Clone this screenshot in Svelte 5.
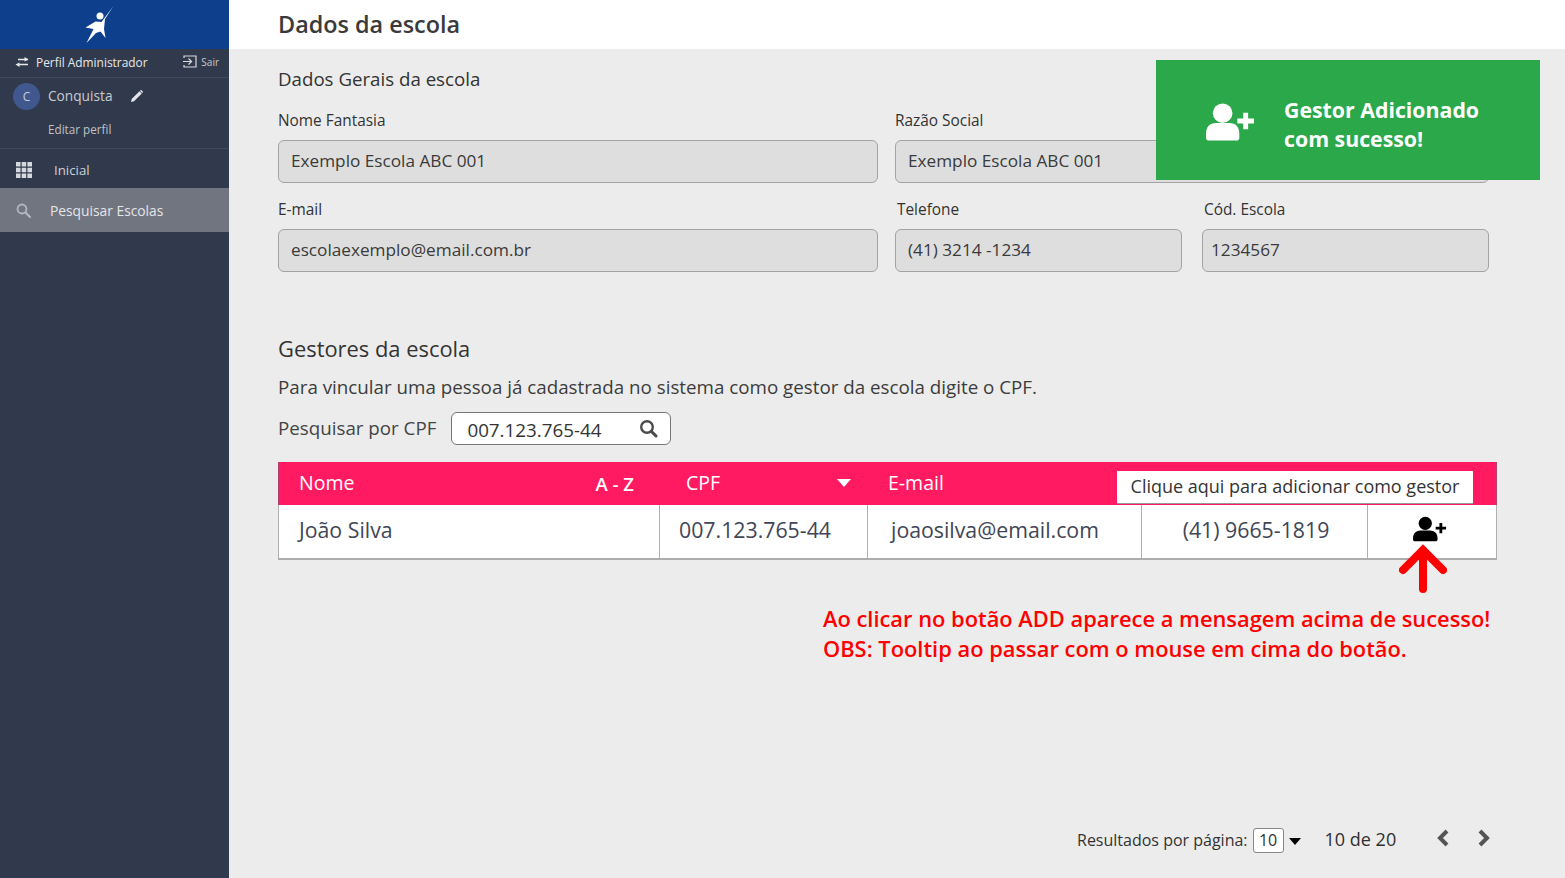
<script lang="ts">
	const navItems = [
		{ label: 'Inicial', icon: 'grid', active: false },
		{ label: 'Pesquisar Escolas', icon: 'search', active: true }
	];
</script>

<div class="page">
	<aside class="sidebar">
		<div class="brand">
			<svg width="34" height="40" viewBox="0 0 34 40">
				<circle cx="16" cy="11" r="3.500" fill="#fff" />
				<path fill="#fff" d="M29.500 1 21 14l-1 10 1.500 9-5-6.500-4.500 1.500-9.500 10 7-14-8-1.500 10-6 6 .5z" />
			</svg>
		</div>
		<div class="profile-bar">
			<svg class="swap" width="14" height="10" viewBox="0 0 14 10">
				<path fill="none" stroke="#e8e8e8" stroke-width="1.300" d="M4 7.500h9M13 2.500H3" />
				<path fill="#e8e8e8" d="M9.500 0 13.500 2.500 9.500 4.500zM4.500 5.500 0.500 7.500 4.500 10z" />
			</svg>
			<span class="profile-name">Perfil Administrador</span>
			<svg class="exit" width="14" height="13" viewBox="0 0 14 13">
				<path fill="none" stroke="#d8dade" stroke-width="1.200" d="M1 3V1h12v11H1v-2M0 6.500h8M5.500 3.500l3 3-3 3" />
			</svg>
			<span class="exit-label">Sair</span>
		</div>
		<div class="user">
			<div class="user-row">
				<span class="avatar">C</span>
				<span class="user-name">Conquista</span>
				<svg width="13" height="13" viewBox="0 0 13 13">
					<path fill="#e4e5e8" d="M9.500 1.200 11.800 3.500 4 11.300 1 12l.7-3zM10.300.4c.4-.4 1-.4 1.400 0l.9.900c.4.400.4 1 0 1.400l-.4.400L10 .7z" />
				</svg>
			</div>
			<span class="edit">Editar perfil</span>
		</div>
		<nav class="nav">
			{#each navItems as item}
				<div class="nav-item {item.active ? 'active' : ''}">
					{#if item.icon === 'grid'}
						<svg width="16" height="16" viewBox="0 0 16 16">
							<path fill="#d5d8de" d="M0 0h4.500v4.500H0zM5.700 0h4.500v4.500H5.700zM11.400 0H16v4.500h-4.600zM0 5.700h4.500v4.500H0zM5.700 5.700h4.500v4.500H5.700zM11.400 5.700H16v4.500h-4.600zM0 11.400h4.500V16H0zM5.700 11.400h4.500V16H5.700zM11.400 11.400H16V16h-4.600z" />
						</svg>
					{:else}
						<svg width="15" height="15" viewBox="0 0 15 15">
							<circle cx="6" cy="6" r="4.500" fill="none" stroke="#b4b7bf" stroke-width="1.800" />
							<path d="M9.500 9.500 14 14" stroke="#b4b7bf" stroke-width="2.200" stroke-linecap="round" />
						</svg>
					{/if}
					<span>{item.label}</span>
				</div>
			{/each}
		</nav>
	</aside>

	<main class="main">
		<header class="topbar"><h1>Dados da escola</h1></header>

		<div class="content">
			<h2 class="general-title">Dados Gerais da escola</h2>

			<div class="row first">
				<div class="field">
					<span class="field-label">Nome Fantasia</span>
					<div class="input">Exemplo Escola ABC 001</div>
				</div>
				<div class="field wide">
					<span class="field-label">Razão Social</span>
					<div class="input">Exemplo Escola ABC 001</div>
				</div>
			</div>

			<div class="row">
				<div class="field">
					<span class="field-label">E-mail</span>
					<div class="input">escolaexemplo@email.com.br</div>
				</div>
				<div class="field phone">
					<span class="field-label">Telefone</span>
					<div class="input">(41) 3214 -1234</div>
				</div>
				<div class="field code">
					<span class="field-label">Cód. Escola</span>
					<div class="input">1234567</div>
				</div>
			</div>

			<h2 class="managers-title">Gestores da escola</h2>
			<p class="hint">Para vincular uma pessoa já cadastrada no sistema como gestor da escola digite o CPF.</p>

			<div class="cpf-search">
				<span class="cpf-label">Pesquisar por CPF</span>
				<div class="cpf-input">
					<span class="cpf-value">007.123.765-44</span>
					<svg width="19" height="19" viewBox="0 0 19 19">
						<circle cx="8" cy="8" r="5.800" fill="none" stroke="#4a4a4a" stroke-width="2.400" />
						<path d="M12.500 12.500 17 17" stroke="#4a4a4a" stroke-width="3" stroke-linecap="round" />
					</svg>
				</div>
			</div>

			<div class="table">
				<div class="cell head name-col">
					<span>Nome</span>
					<b class="sort">A - Z</b>
				</div>
				<div class="cell head cpf-col">
					<span>CPF</span>
					<svg width="14" height="8" viewBox="0 0 14 8"><path fill="#fff" d="M0 0h14L7 8z" /></svg>
				</div>
				<div class="cell head mail-col"><span>E-mail</span></div>
				<div class="cell head phone-col"></div>
				<div class="cell head action-col"></div>

				<div class="cell name-col body">João Silva</div>
				<div class="cell cpf-col body">007.123.765-44</div>
				<div class="cell mail-col body">joaosilva@email.com</div>
				<div class="cell phone-col body">(41) 9665-1819</div>
				<div class="cell action-col body">
					<svg width="34" height="27" viewBox="0 0 36 28">
						<circle cx="13" cy="7.500" r="7" fill="#000" />
						<path fill="#000" d="M0 23c0-5 3.500-8 8-8h10c4.500 0 8 3 8 8v1.500c0 1.200-1 2-2 2H2c-1 0-2-.8-2-2z" />
						<path d="M24 12.500h11M29.500 7v11" stroke="#000" stroke-width="3" />
					</svg>
				</div>

				<div class="tooltip">Clique aqui para adicionar como gestor</div>
				<svg class="arrow" width="48" height="52" viewBox="0 0 48 52">
					<path d="M24 47V8M4 28 24 8l20 20" fill="none" stroke="#ff0000" stroke-width="8" stroke-linecap="round" stroke-linejoin="miter" />
				</svg>
			</div>

			<p class="note">
				Ao clicar no botão ADD aparece a mensagem acima de sucesso!<br />
				OBS: Tooltip ao passar com o mouse em cima do botão.
			</p>

			<div class="pagination">
				<span class="per-page">Resultados por página:</span>
				<span class="page-size">10</span>
				<svg class="caret" width="12" height="7" viewBox="0 0 12 7"><path fill="#000" d="M0 0h12L6 7z" /></svg>
				<span class="range">10 de 20</span>
				<svg class="prev" width="14" height="18" viewBox="0 0 14 18">
					<path d="M11 2 4 9l7 7" fill="none" stroke="#555" stroke-width="4" />
				</svg>
				<svg class="next" width="14" height="18" viewBox="0 0 14 18">
					<path d="M3 2l7 7-7 7" fill="none" stroke="#555" stroke-width="4" />
				</svg>
			</div>
		</div>

		<div class="toast">
			<svg width="49" height="40" viewBox="0 0 50 40">
				<circle cx="17" cy="11" r="10" fill="#fff" />
				<path fill="#fff" d="M0 32c0-7 4-11 10-11h14c6 0 10 4 10 11v4c0 2-1.500 3-3 3H3c-1.500 0-3-1-3-3z" />
				<path d="M32 19h17M40.500 10.500v17" stroke="#fff" stroke-width="5" />
			</svg>
			<p>Gestor Adicionado<br />com sucesso!</p>
		</div>
	</main>
</div>

<style>
	:global(body) {
		margin: 0;
		background: #ececec;
	}

	.page {
		display: flex;
		height: 878px;
		overflow: hidden;
		font-family: 'Open Sans', 'Noto Sans', sans-serif;
		color: #333;
	}

	.sidebar {
		width: 229px;
		flex-shrink: 0;
		background: #313a4c;
		display: flex;
		flex-direction: column;
	}

	.brand {
		height: 49px;
		background: #0d3f8c;
		display: flex;
		align-items: center;
		justify-content: flex-start;
		padding-left: 84px;
	}

	.profile-bar {
		height: 29px;
		display: flex;
		align-items: center;
		padding: 0 10px 3px 15px;
		box-sizing: border-box;
		border-bottom: 1px solid #414a5c;
		font-size: 11.900px;
		color: #e6e7ea;
	}

	.profile-name {
		margin-left: 7px;
		flex: 1;
		font-weight: 500;
	}

	.exit-label {
		margin-left: 4px;
		font-size: 10px;
		color: #c6c9cf;
	}

	.user {
		height: 71px;
		border-bottom: 1px solid #414a5c;
		display: flex;
		flex-direction: column;
		box-sizing: border-box;
		padding: 5px 0 0 13px;
	}

	.user-row {
		display: flex;
		align-items: center;
		height: 27px;
	}

	.avatar {
		width: 27px;
		height: 27px;
		border-radius: 50%;
		background: #41588f;
		color: #c9cfdc;
		display: flex;
		align-items: center;
		justify-content: center;
		font-size: 12px;
	}

	.user-name {
		margin: 0 18px 2px 8px;
		font-size: 13.700px;
		color: #c9cbd0;
	}

	.edit {
		margin: 11px 0 0 35px;
		font-size: 11.700px;
		font-weight: 500;
		color: #bfc2c8;
	}

	.nav-item {
		display: flex;
		align-items: center;
		height: 39px;
		box-sizing: border-box;
		padding: 3px 0 0 16px;
		font-size: 13.300px;
		color: #cdd0d6;
	}

	.nav-item span {
		margin-left: 22px;
	}

	.nav-item.active {
		height: 44px;
		padding-top: 0;
		background: #717580;
		color: #e4e5e8;
		font-size: 13.800px;
	}

	.nav-item.active span {
		margin-left: 19px;
	}

	.main {
		flex: 1;
		display: flex;
		flex-direction: column;
		position: relative;
		min-width: 0;
	}

	.topbar {
		height: 49px;
		background: #fff;
		box-sizing: border-box;
		padding: 0 0 2px 49px;
		display: flex;
		align-items: center;
	}

	h1 {
		margin: 0;
		font-size: 23.400px;
		font-weight: 600;
		color: #3a3a3a;
	}

	.content {
		flex: 1;
		display: flex;
		flex-direction: column;
		padding: 0 68px 0 49px;
		min-height: 0;
	}

	h2 {
		margin: 0;
		font-weight: 400;
		color: #333;
	}

	.general-title {
		font-size: 18.700px;
		line-height: 26px;
		margin-top: 17px;
	}

	.row {
		display: flex;
		gap: 17px;
		width: 1212px;
		margin-top: 16px;
	}

	.row.first {
		margin-top: 18px;
	}

	.field {
		width: 600px;
		flex-shrink: 0;
		display: flex;
		flex-direction: column;
	}

	.field.wide {
		width: 594px;
	}

	.field.phone {
		width: 287px;
	}

	.field.code {
		width: 287px;
		margin-left: 3px;
	}

	.field-label {
		font-size: 15.400px;
		line-height: 20px;
		margin: 1px 0 9px;
		color: #333;
	}

	.field.phone .field-label {
		margin-left: 2px;
	}

	.field.code .field-label {
		margin-left: 2px;
	}

	.input {
		height: 43px;
		box-sizing: border-box;
		border: 1px solid #a3a3a3;
		border-radius: 6px;
		background: #dedede;
		display: flex;
		align-items: center;
		padding: 0 0 3px 12px;
		font-size: 17.200px;
		color: #3a3a3a;
	}

	.field.code .input {
		padding-left: 8px;
	}

	.managers-title {
		font-size: 21.900px;
		line-height: 28px;
		margin-top: 63px;
	}

	.hint {
		margin: 11px 0 0;
		font-size: 18.770px;
		line-height: 26px;
		color: #3c3c3c;
		white-space: nowrap;
	}

	.cpf-search {
		display: flex;
		align-items: center;
		margin-top: 12px;
		gap: 15px;
	}

	.cpf-label {
		font-size: 18.750px;
		color: #444;
		margin-bottom: 2px;
	}

	.cpf-input {
		width: 220px;
		height: 33px;
		box-sizing: border-box;
		background: #fff;
		border: 1px solid #777;
		border-radius: 6px;
		display: flex;
		align-items: center;
		justify-content: space-between;
		padding: 0 12px 0 15px;
		font-size: 18.800px;
		color: #333;
	}

	.cpf-value {
		margin-top: 2px;
	}

	.table {
		position: relative;
		display: grid;
		grid-template-columns: 382px 208px 274px 226px 129px;
		grid-template-rows: 43px 53px;
		width: 1219px;
		margin-top: 17px;
		box-sizing: border-box;
		border-bottom: 2px solid #adadad;
	}

	.cell {
		box-sizing: border-box;
		display: flex;
		align-items: center;
		border-right: 1px solid #b0b0b0;
	}

	.cell.name-col {
		border-left: 1px solid #b0b0b0;
	}

	.head {
		background: #ff1a62;
		color: #fff;
		font-size: 19.500px;
		justify-content: space-between;
		padding-bottom: 2px;
		border-color: #b0406e !important;
	}

	.head.name-col {
		padding: 0 25px 2px 20px;
	}

	.head.cpf-col {
		padding: 0 16px 2px 26px;
	}

	.head.mail-col {
		padding-left: 20px;
	}

	.sort {
		font-size: 18.500px;
		font-weight: 600;
		margin-top: 2px;
	}

	.body {
		background: #fff;
		font-size: 21.300px;
		color: #3f4656;
		padding-bottom: 5px;
	}

	.body.name-col {
		padding-left: 20px;
	}

	.body.cpf-col {
		padding-left: 19px;
	}

	.body.mail-col {
		padding-left: 23px;
	}

	.body.phone-col {
		justify-content: center;
		padding-left: 3px;
	}

	.body.action-col {
		justify-content: center;
		padding: 0 5px 4px 0;
	}

	.tooltip {
		position: absolute;
		top: 9px;
		left: 839px;
		width: 356px;
		height: 33px;
		box-sizing: border-box;
		padding-bottom: 2px;
		background: #fff;
		border-bottom: 1px solid #999;
		display: flex;
		align-items: center;
		justify-content: center;
		font-size: 18px;
		color: #333;
	}

	.arrow {
		position: absolute;
		left: 1121px;
		top: 80px;
	}

	.note {
		margin: 44px 0 0 545px;
		font-size: 21.860px;
		line-height: 29.500px;
		font-weight: 600;
		color: #ff0000;
		white-space: nowrap;
	}

	.pagination {
		margin-top: auto;
		margin-bottom: 25px;
		display: flex;
		align-items: center;
		padding-left: 799px;
		color: #333;
	}

	.per-page {
		font-size: 16px;
	}

	.page-size {
		margin-left: 5px;
		width: 31px;
		height: 25px;
		box-sizing: border-box;
		background: #fff;
		border: 1px solid #888;
		border-radius: 3px;
		display: flex;
		align-items: center;
		justify-content: center;
		font-size: 16px;
	}

	.caret {
		margin: 2px 0 0 5px;
	}

	.range {
		margin: 0 0 2px 24px;
		font-size: 18px;
		color: #2f2f2f;
	}

	.prev {
		margin: 0 0 4px 40px;
	}

	.next {
		margin: 0 0 4px 27px;
	}

	.toast {
		position: absolute;
		top: 60px;
		left: 927px;
		width: 384px;
		height: 120px;
		background: #2aa84a;
		display: flex;
		align-items: center;
		box-sizing: border-box;
		padding-left: 50px;
		color: #fff;
	}

	.toast svg {
		margin-top: 3px;
	}

	.toast p {
		margin: 8px 0 0 29px;
		font-size: 21.300px;
		line-height: 29.500px;
		font-weight: 700;
		white-space: nowrap;
	}
</style>
